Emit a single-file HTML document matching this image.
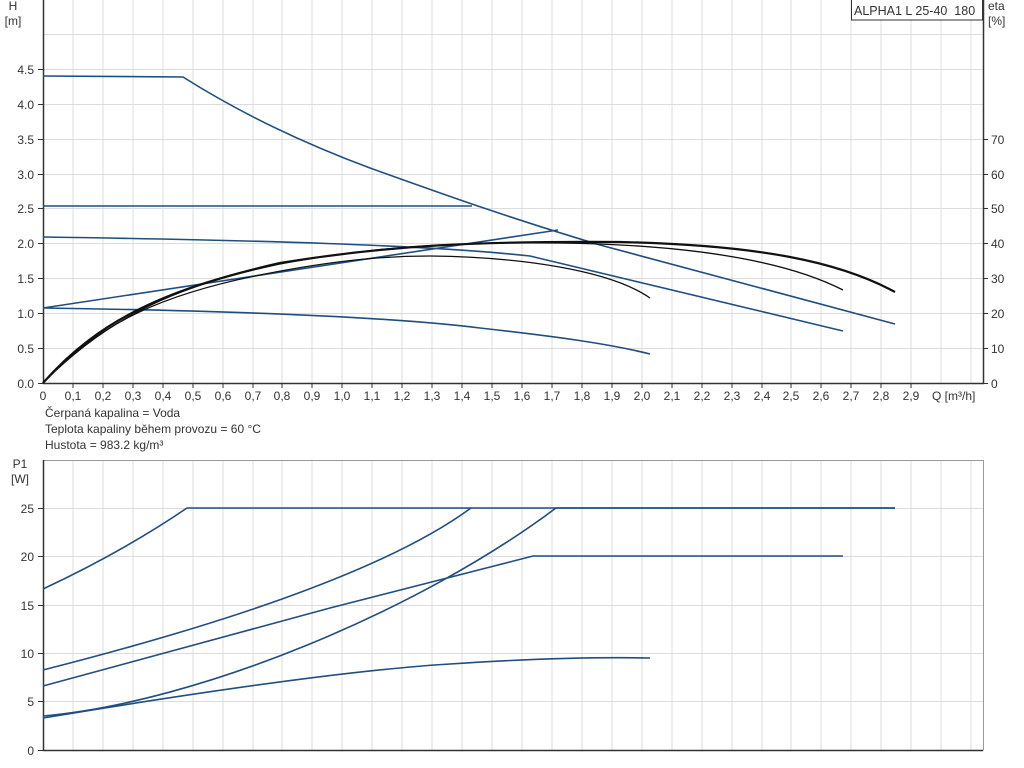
<!DOCTYPE html>
<html><head><meta charset="utf-8"><style>
html,body{margin:0;padding:0;background:#fff;width:1024px;height:768px;overflow:hidden}
svg{display:block}
text{font-family:"Liberation Sans",sans-serif;font-size:12px;fill:#333}
</style></head><body>
<svg width="1024" height="768" viewBox="0 0 1024 768" xmlns="http://www.w3.org/2000/svg">
<g stroke="#dcdcdc" stroke-width="1" fill="none">
<path d="M43,34.5H983M43,69.5H983M43,104.5H983M43,139.5H983M43,174.5H983M43,208.5H983M43,243.5H983M43,278.5H983M43,313.5H983M43,348.5H983"/>
<path d="M73,0V383M103,0V383M133,0V383M163,0V383M193,0V383M223,0V383M253,0V383M282,0V383M312,0V383M342,0V383M372,0V383M402,0V383M432,0V383M462,0V383M492,0V383M522,0V383M552,0V383M582,0V383M612,0V383M642,0V383M672,0V383M702,0V383M732,0V383M762,0V383M791,0V383M821,0V383M851,0V383M881,0V383M911,0V383M941,0V383M971,0V383"/>
<path d="M43,508.5H983M43,556.5H983M43,605.5H983M43,653.5H983M43,701.5H983"/>
<path d="M73,460V750M103,460V750M133,460V750M163,460V750M193,460V750M223,460V750M253,460V750M282,460V750M312,460V750M342,460V750M372,460V750M402,460V750M432,460V750M462,460V750M492,460V750M522,460V750M552,460V750M582,460V750M612,460V750M642,460V750M672,460V750M702,460V750M732,460V750M762,460V750M791,460V750M821,460V750M851,460V750M881,460V750M911,460V750M941,460V750M971,460V750"/>
</g>
<path d="M43,460.5H983.5V750.5" stroke="#999" fill="none"/>
<g stroke="#333" stroke-width="1.5" fill="none">
<path d="M43.5,0V383.5H983.5V0"/>
<path d="M43.5,460V750.5H983"/>
</g>
<g stroke="#333" stroke-width="1" fill="none">
<path d="M38,69.5H43M38,104.5H43M38,139.5H43M38,174.5H43M38,208.5H43M38,243.5H43M38,278.5H43M38,313.5H43M38,348.5H43M38,383.5H43"/>
<path d="M983,139.5H988M983,174.5H988M983,208.5H988M983,243.5H988M983,278.5H988M983,313.5H988M983,348.5H988M983,383.5H988"/>
<path d="M73,383V388M103,383V388M133,383V388M163,383V388M193,383V388M223,383V388M253,383V388M282,383V388M312,383V388M342,383V388M372,383V388M402,383V388M432,383V388M462,383V388M492,383V388M522,383V388M552,383V388M582,383V388M612,383V388M642,383V388M672,383V388M702,383V388M732,383V388M762,383V388M791,383V388M821,383V388M851,383V388M881,383V388M911,383V388"/>
<path d="M38,508.5H43M38,556.5H43M38,605.5H43M38,653.5H43M38,701.5H43M38,750.5H43"/>
</g>
<g stroke="#1f4e80" stroke-width="1.6" fill="none">
<path d="M43,76L183,77C240,113 300,142 370,168C440,193 500,215 600,245C700,272 800,298 895,324"/>
<path d="M43,206H472"/>
<path d="M43,237C250,240 430,245 530,256L843,331"/>
<path d="M43,308C250,311 400,318 480,328C560,337 610,344 650,354"/>
<path d="M43,308L558,230"/>
</g>
<g stroke="#111" fill="none">
<path d="M43,383C100,320 170,293 260,275C340,259 390,256 430,256C520,257 610,270 650,298" stroke-width="1.3"/>
<path d="M43,383C110,315 180,285 280,264C380,245 470,242 560,243C700,245 790,263 843,290" stroke-width="1.3"/>
<path d="M43,383C100,318 170,288 280,263C390,245 480,241 620,242C760,245 840,262 895,292" stroke-width="2.2"/>
</g>
<g stroke="#1f4e80" stroke-width="1.6" fill="none">
<path d="M43,589C90,567 140,540 187,508H895"/>
<path d="M43,670C200,630 380,575 471,508"/>
<path d="M43,716C200,702 420,610 556,508H895"/>
<path d="M43,686L330,608L533,556H843"/>
<path d="M43,718C200,692 350,670 450,664C540,658 600,657 650,658"/>
</g>
<text x="13" y="10" text-anchor="middle">H</text>
<text x="13" y="25" text-anchor="middle">[m]</text>
<g text-anchor="end">
<text x="34" y="74">4.5</text><text x="34" y="109">4.0</text><text x="34" y="144">3.5</text><text x="34" y="179">3.0</text><text x="34" y="213">2.5</text><text x="34" y="248">2.0</text><text x="34" y="283">1.5</text><text x="34" y="318">1.0</text><text x="34" y="353">0.5</text><text x="34" y="388">0.0</text>
<text x="34" y="513">25</text><text x="34" y="561">20</text><text x="34" y="610">15</text><text x="34" y="658">10</text><text x="34" y="706">5</text><text x="34" y="755">0</text>
</g>
<text x="20" y="468" text-anchor="middle">P1</text>
<text x="20" y="483" text-anchor="middle">[W]</text>
<g>
<text x="991" y="144">70</text><text x="991" y="179">60</text><text x="991" y="213">50</text><text x="991" y="248">40</text><text x="991" y="283">30</text><text x="991" y="318">20</text><text x="991" y="353">10</text><text x="991" y="388">0</text>
<text x="988" y="10">eta</text><text x="988" y="25">[%]</text>
</g>
<g text-anchor="middle">
<text x="43" y="400">0</text><text x="73" y="400">0,1</text><text x="103" y="400">0,2</text><text x="133" y="400">0,3</text><text x="163" y="400">0,4</text><text x="193" y="400">0,5</text><text x="223" y="400">0,6</text><text x="253" y="400">0,7</text><text x="282" y="400">0,8</text><text x="312" y="400">0,9</text><text x="342" y="400">1,0</text><text x="372" y="400">1,1</text><text x="402" y="400">1,2</text><text x="432" y="400">1,3</text><text x="462" y="400">1,4</text><text x="492" y="400">1,5</text><text x="522" y="400">1,6</text><text x="552" y="400">1,7</text><text x="582" y="400">1,8</text><text x="612" y="400">1,9</text><text x="642" y="400">2,0</text><text x="672" y="400">2,1</text><text x="702" y="400">2,2</text><text x="732" y="400">2,3</text><text x="762" y="400">2,4</text><text x="791" y="400">2,5</text><text x="821" y="400">2,6</text><text x="851" y="400">2,7</text><text x="881" y="400">2,8</text><text x="911" y="400">2,9</text>
</g>
<text x="932" y="400">Q [m³/h]</text>
<text x="45" y="417">Čerpaná kapalina = Voda</text>
<text x="45" y="433">Teplota kapaliny během provozu = 60 °C</text>
<text x="45" y="449">Hustota = 983.2 kg/m³</text>
<rect x="851.5" y="-1" width="131" height="21" fill="#fff" stroke="#333"/>
<text x="854" y="15" style="font-size:12.5px">ALPHA1 L 25-40&#160; 180</text>
</svg>
</body></html>
